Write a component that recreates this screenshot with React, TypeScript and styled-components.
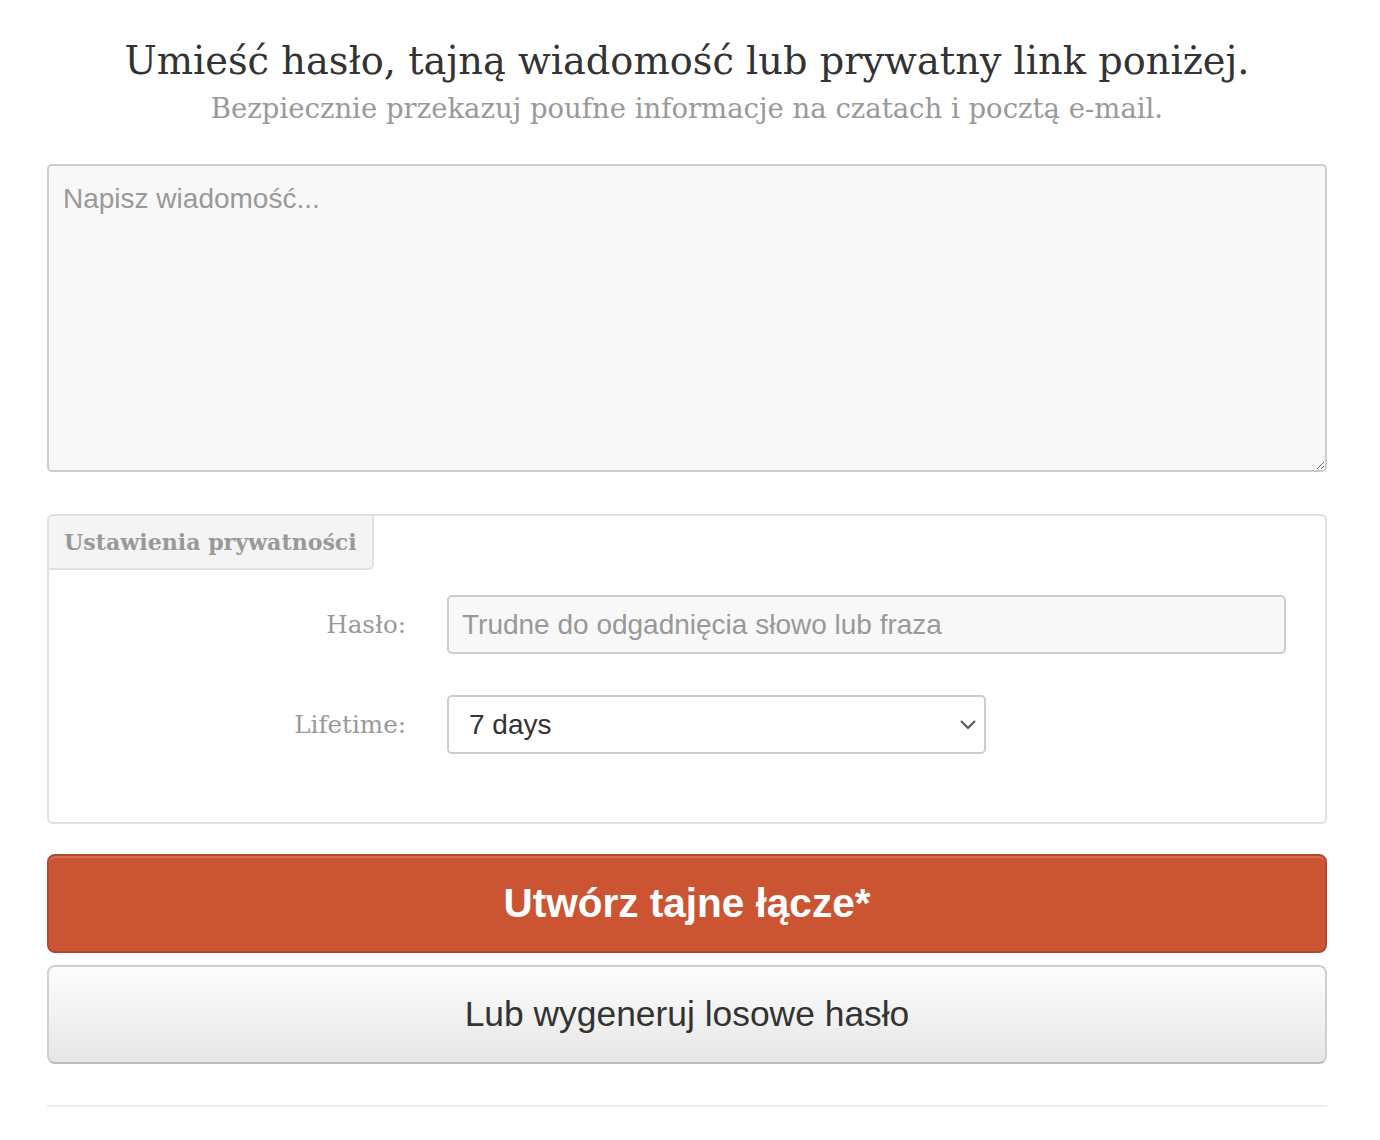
import React from "react";
import styled, { createGlobalStyle } from "styled-components";

const Global = createGlobalStyle`
  html, body { margin: 0; padding: 0; background: #fff; }
  body { font-family: "Liberation Sans", Arial, sans-serif; }
  * { box-sizing: border-box; }
`;

const Page = styled.main`
  width: 1280px;
  margin: 0 0 0 47px;
  padding-top: 35px;
  padding-bottom: 34px;
`;

const Header = styled.header`
  text-align: center;
  margin-bottom: 35px;
`;

const Title = styled.h1`
  margin: 0;
  font-family: "DejaVu Serif", Georgia, serif;
  font-weight: normal;
  font-size: 38.3px;
  line-height: 52px;
  color: #333;
`;

const Subtitle = styled.p`
  margin: 0;
  font-family: "DejaVu Serif", Georgia, serif;
  font-size: 27.5px;
  line-height: 42px;
  color: #999;
`;

const Message = styled.textarea`
  display: block;
  width: 100%;
  height: 308px;
  margin: 0;
  padding: 17px 14px;
  background: #f8f8f8;
  border: 2px solid #ccc;
  border-radius: 5px;
  font-family: "Liberation Sans", Arial, sans-serif;
  font-size: 28px;
  color: #333;
  resize: vertical;
  &::placeholder { color: #999; }
`;

const Panel = styled.section`
  margin-top: 42px;
  border: 2px solid #e0e0e0;
  border-radius: 6px;
  padding-bottom: 68px;
`;

const Tab = styled.div`
  display: inline-flex;
  align-items: center;
  height: 54px;
  padding: 0 15px;
  background: #f4f4f4;
  border-right: 2px solid #e0e0e0;
  border-bottom: 2px solid #e0e0e0;
  border-bottom-right-radius: 6px;
  border-top-left-radius: 5px;
  font-family: "DejaVu Serif", Georgia, serif;
  font-weight: bold;
  font-size: 22.1px;
  color: #999;
`;

const Fields = styled.div`
  display: grid;
  grid-template-columns: 357px 1fr;
  column-gap: 41px;
  row-gap: 41px;
  padding: 25px 39px 0 0;
  align-items: center;
`;

const Label = styled.label`
  text-align: right;
  font-family: "DejaVu Serif", Georgia, serif;
  font-size: 24.6px;
  color: #999;
`;

const TextInput = styled.input`
  width: 100%;
  height: 59px;
  padding: 0 13px;
  background: #f8f8f8;
  border: 2px solid #ccc;
  border-radius: 5px;
  font-family: "Liberation Sans", Arial, sans-serif;
  font-size: 28px;
  color: #333;
  &::placeholder { color: #999; }
`;

const SelectWrap = styled.div`
  position: relative;
  width: 539px;
`;

const Select = styled.select`
  width: 100%;
  height: 59px;
  padding: 0 20px;
  appearance: none;
  background: #fff;
  border: 2px solid #ccc;
  border-radius: 5px;
  font-family: "Liberation Sans", Arial, sans-serif;
  font-size: 28px;
  color: #333;
`;

const Chevron = styled.svg`
  position: absolute;
  right: 9px;
  top: 23px;
  pointer-events: none;
`;

const Button = styled.button<{ $primary?: boolean }>`
  display: block;
  width: 100%;
  height: 99px;
  margin-top: ${(p) => (p.$primary ? "30px" : "12px")};
  border-radius: 8px;
  font-family: "Liberation Sans", Arial, sans-serif;
  cursor: pointer;
  ${(p) =>
    p.$primary
      ? `
    background: #cb5533;
    border: 2px solid #b3472a;
    color: #fff;
    font-size: 40.5px;
    font-weight: bold;
    box-shadow: inset 0 2px 0 rgba(255,255,255,0.15);
  `
      : `
    background: linear-gradient(#fdfdfd, #e6e6e6);
    border: 2px solid #d0d0d0;
    border-bottom-color: #bcbcbc;
    color: #333;
    font-size: 35.4px;
    font-weight: normal;
  `}
`;

const Rule = styled.hr`
  margin: 41px 0 0;
  border: 0;
  border-top: 2px solid #eee;
`;

export default function App() {
  return (
    <>
      <Global />
      <Page>
        <Header>
          <Title>Umieść hasło, tajną wiadomość lub prywatny link poniżej.</Title>
          <Subtitle>Bezpiecznie przekazuj poufne informacje na czatach i pocztą e-mail.</Subtitle>
        </Header>
        <Message placeholder="Napisz wiadomość..." />
        <Panel>
          <Tab>Ustawienia prywatności</Tab>
          <Fields>
            <Label htmlFor="pass">Hasło:</Label>
            <TextInput id="pass" placeholder="Trudne do odgadnięcia słowo lub fraza" />
            <Label htmlFor="life">Lifetime:</Label>
            <SelectWrap>
              <Select id="life" defaultValue="7">
                <option value="7">7 days</option>
              </Select>
              <Chevron width="18" height="12" viewBox="0 0 18 12">
                <path d="M2 3l7 7 7-7" fill="none" stroke="#555" strokeWidth="2" />
              </Chevron>
            </SelectWrap>
          </Fields>
        </Panel>
        <Button $primary>Utwórz tajne łącze*</Button>
        <Button>Lub wygeneruj losowe hasło</Button>
        <Rule />
      </Page>
    </>
  );
}
